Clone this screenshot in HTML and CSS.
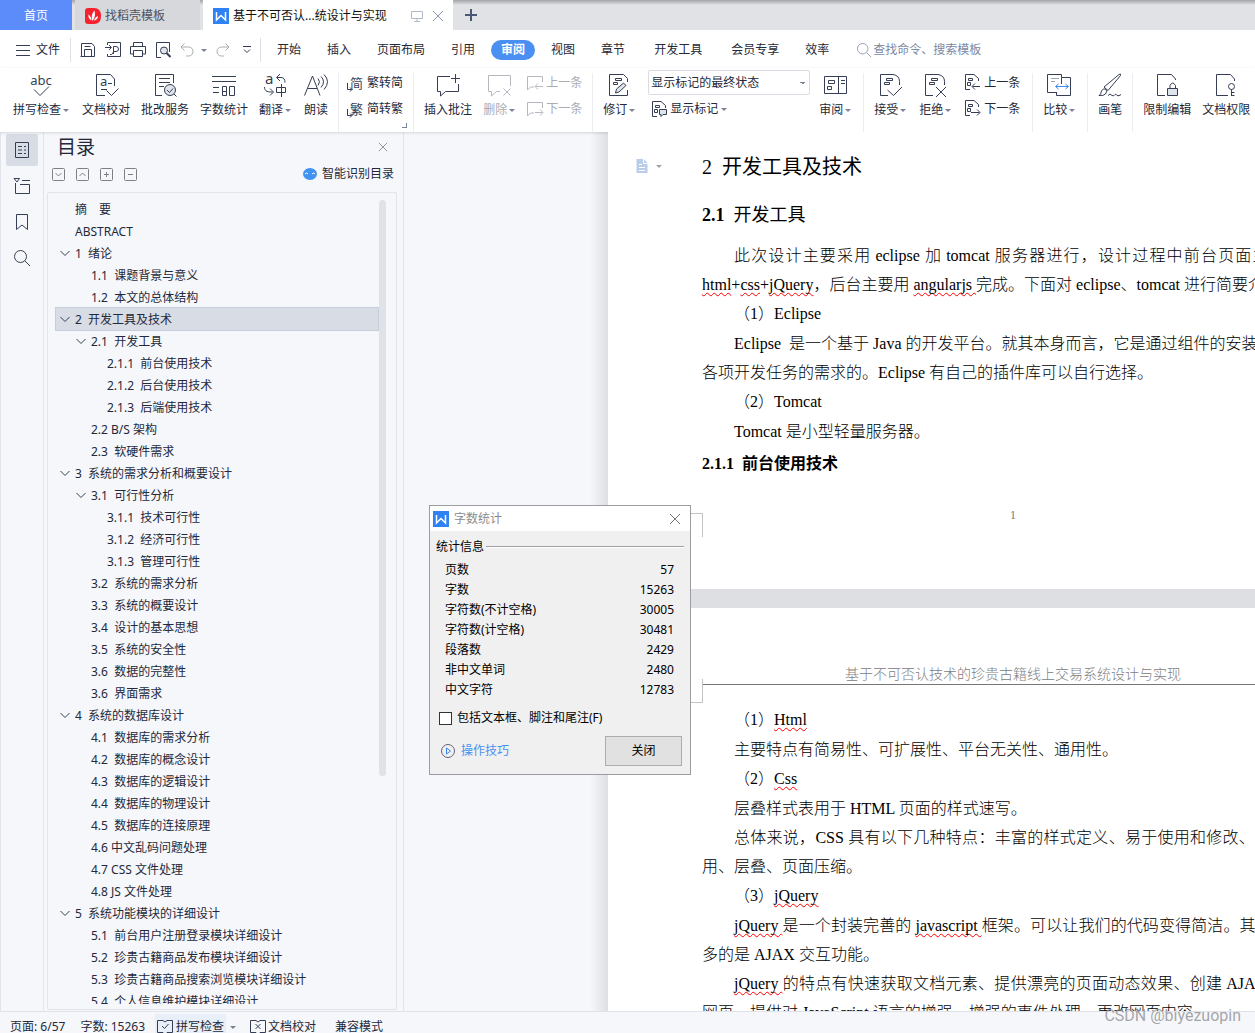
FILE: index.html
```html
<!DOCTYPE html>
<html lang="zh-CN">
<head>
<meta charset="utf-8">
<title>基于不可否认技术的珍贵古籍线上交易系统设计与实现</title>
<link rel="stylesheet" href="styles.css">
</head>
<body>
<svg class="defs" aria-hidden="true">
  <symbol id="pg" viewBox="0 0 24 24"><path d="M10 22.500H2.500V1.500H15q6.500 1 6.500 7V12M8.500 5.500h6v2h-6zM6.500 9.500h5v2h-5z"/></symbol>
  <symbol id="wlogo" viewBox="0 0 16 16"><path d="M0 0h16v16H0z" fill="#2f82f3" stroke="none"/><path d="M3.500 4v8l4.500-4.500 4.500 4.500V4" fill="none" stroke="#fff" stroke-width="1.500"/></symbol>
  <symbol id="x" viewBox="0 0 12 12"><path d="M1 1l10 10M11 1L1 11"/></symbol>
  <symbol id="chev" viewBox="0 0 10 10"><path d="M0.500 3l4.500 4.500L9.500 3"/></symbol>
  <symbol id="lens" viewBox="0 0 16 16"><circle cx="6.500" cy="6.500" r="6"/><path d="M11 11l5 5"/></symbol>
  <symbol id="smallpg" viewBox="0 0 18 18"><path d="M6 15.500H1.500V.500H10l4.500 4V7M4.500 4.500h4v2h-4zM3.500 8.500h3v3h-3z"/></symbol>
  <symbol id="bubble" viewBox="0 0 18 18"><path d="M16.500 8V2.500H1.500v13.500l3-3H8"/></symbol>
</svg>
<div class="app">
  <header class="tabs">
    <button class="tab home">首页</button>
    <button class="tab idle"><svg class="i16" viewBox="0 0 16 16"><path d="M3 0h6q7 0 7 8t-7 8H3q-3 0-3-3V3q0-3 3-3z" fill="#f5222d" stroke="none"/><path d="M7.500 13C6 9 7 5 9.500 2.500 10.500 6 10 10 7.500 13zM6.500 12.500C4 11 3 9 3.500 6.500 5.500 8 6.500 10 6.500 12.500zM9 12.500c.500-2 2-4 4-4.500C13 10.500 11.500 12 9 12.500z" fill="#fff" stroke="none"/></svg>找稻壳模板</button>
    <div class="tab active"><svg class="i16"><use href="#wlogo"/></svg><span>基于不可否认...统设计与实现</span>
      <svg class="i12 mon" viewBox="0 0 12 12"><path d="M.500 1.500h11v7H.500zM6 9v2M3 11.500h6"/></svg>
      <button class="bare" aria-label="关闭标签"><svg class="i12 mute"><use href="#x"/></svg></button></div>
    <button class="bare plus" aria-label="新建"><svg class="i12" viewBox="0 0 12 12"><path d="M6 0v12M0 6h12" stroke="#4a5878" stroke-width="2"/></svg></button>
  </header>

  <nav class="menu">
    <button class="bare file"><svg class="i14" viewBox="0 0 14 14"><path d="M0 2.500h14M0 7.500h14M0 12.500h14"/></svg>文件</button>
    <span class="rule"></span>
    <div class="quick">
      <button class="bare" aria-label="保存"><svg class="i16" viewBox="0 0 16 16"><path d="M1.500 15V1.500H12l2.500 3V14.500H.500M4.500 14V7.500h7V14M4.500 4.500h6"/></svg></button>
      <button class="bare" aria-label="输出PDF"><svg class="i16" viewBox="0 0 16 16"><path d="M2.500 3V.500h13v14h-13V12M0 5.500h6M4 3l2.500 2.500L4 8M8.500 12V4.500h2.500a2 2 0 010 5H8M5 12.500c2 .500 3-1 3.500-3"/></svg></button>
      <button class="bare" aria-label="打印"><svg class="i16" viewBox="0 0 16 16"><path d="M3.500 4V.500h9V4M3.500 12H.500V4.500h15V12h-3M3.500 8.500h9v6h-9z"/></svg></button>
      <button class="bare" aria-label="打印预览"><svg class="i16" viewBox="0 0 16 16"><path d="M6 15.500H1.500V.500h13V10"/><circle cx="9" cy="8.500" r="3.500" fill="#dfe3ea"/><path d="M11.500 11l4 4" stroke-width="2"/></svg></button>
      <button class="bare undo" aria-label="撤销"><svg class="i14" viewBox="0 0 14 14"><path d="M4.500.500L1 4l3.500 3.500M1 4h7.500c6 0 6 9 0 9H6"/></svg></button>
      <i class="caret"></i>
      <button class="bare redo" aria-label="恢复"><svg class="i14" viewBox="0 0 14 14"><path d="M9.500.500L13 4 9.500 7.500M13 4H5.500c-6 0-6 9 0 9H8"/></svg></button>
      <button class="bare more" aria-label="更多"><svg class="i8" viewBox="0 0 8 8"><path d="M0 .500h8M1 3.500l3 3 3-3"/></svg></button>
    </div>
    <span class="rule"></span>
    <div class="items">
      <button class="item">开始</button><button class="item">插入</button><button class="item">页面布局</button><button class="item">引用</button><button class="item on">审阅</button><button class="item">视图</button><button class="item">章节</button><button class="item wide">开发工具</button><button class="item wide">会员专享</button><button class="item">效率</button>
    </div>
    <label class="find"><svg class="i14"><use href="#lens"/></svg><input type="text" aria-label="查找命令" placeholder="查找命令、搜索模板"></label>
  </nav>

  <section class="ribbon">
    <button class="big drop"><svg class="i24" viewBox="0 0 24 24"><text x="12" y="12" text-anchor="middle" font-size="13">abc</text><path d="M5 16.500l6 6 9-9"/></svg><span>拼写检查<i class="caret"></i></span></button>
    <button class="big"><svg class="i24" viewBox="0 0 24 24"><path d="M11 22.500H2.500v-21h14l4 4.500v7M12.500 17.500l5 5 7-7M14 10.500h4M7 16.500h6"/><text x="6" y="13" font-size="13">a</text></svg><span>文档校对</span></button>
    <button class="big"><svg class="i24" viewBox="0 0 24 24"><path d="M9 22.500H2.500v-21h18V10M6 5.500h11M6 9.500h11M6 13.500h5"/><circle cx="17" cy="17" r="5.500" fill="#dfe3ea"/><path d="M14 17l2.500 2.500 3.500-4M21 21l2.500 2.500"/></svg><span>批改服务</span></button>
    <button class="big"><svg class="i24" viewBox="0 0 24 24"><path d="M0 3.500h24M0 8.500h24M1 14.500h6M1 19.500h6M10.500 13.500h4v9h-4zM17.500 13.500h5v9h-5zM10 18.500h5"/></svg><span>字数统计</span></button>
    <button class="big drop"><svg class="i24" viewBox="0 0 24 24"><text x="2" y="11" font-size="15">a</text><path d="M17 1l-3.500 3.500L17 8M14 4.500h4q4 0 4 5M1.500 14c0 5 4 5 8 5M7 15.500l3.500 3.500L7 22.500M13.500 14.500h9v5h-9zM18.500 11v13"/></svg><span>翻译<i class="caret"></i></span></button>
    <button class="big"><svg class="i24" viewBox="0 0 24 24"><path d="M.500 22.500L8.500 3l7.500 19.500M4 15.500h9M14 5.500q3 3 0 7M17 3.500q5 5 0 11M20 1.500q7 7 0 15"/></svg><span>朗读</span></button>
    <span class="split first"></span>
    <div class="pair">
      <button class="row hans"><svg class="i16" viewBox="0 0 16 16"><text x="3" y="13" font-size="13">简</text><path d="M.500 8v6.500h4M3 12.500l2 2-2 2"/></svg>繁转简</button>
      <button class="row hans"><svg class="i16" viewBox="0 0 16 16"><text x="3" y="13" font-size="13">繁</text><path d="M.500 8v6.500h4M3 12.500l2 2-2 2"/></svg>简转繁</button>
      <i class="launcher"></i>
    </div>
    <span class="split"></span>
    <button class="big"><svg class="i24" viewBox="0 0 24 24"><path d="M14 3.500H1.500v15h3V23l5-4.500h13V11M19.500 1v9M15 5.500h9"/></svg><span>插入批注</span></button>
    <button class="big off" disabled><svg class="i24" viewBox="0 0 24 24"><path d="M23.500 13V2.500H1.500v16h3V23l5-4.500H13M16.500 15.500l7 7M23.500 15.500l-7 7"/></svg><span>删除<i class="caret"></i></span></button>
    <div class="pair">
      <button class="row off" disabled><svg class="i18" viewBox="0 0 18 18"><use href="#bubble" width="18" height="18"/><path d="M17 12.500H9.500M12 9.500l-3 3 3 3"/></svg>上一条</button>
      <button class="row off" disabled><svg class="i18" viewBox="0 0 18 18"><use href="#bubble" width="18" height="18"/><path d="M9 12.500h7.500M14 9.500l3 3-3 3"/></svg>下一条</button>
    </div>
    <span class="split"></span>
    <button class="big drop"><svg class="i24" viewBox="0 0 24 24"><path d="M20.500 9V5.500l-4-4h-14v21h18V17M8.500 5.500h6v2h-6zM6.500 9.500h4v2h-4z"/><path d="M8.500 20l1-4 7-6 2.500 2.500-7 6.500z" fill="#dfe3ea"/></svg><span>修订<i class="caret"></i></span></button>
    <div class="pair marks">
      <select aria-label="标记状态"><option>显示标记的最终状态</option></select>
      <button class="row"><svg class="i16" viewBox="1 0 16 16"><use href="#smallpg" width="18" height="18"/><path d="M8.500 8.500h7v5H12l-2 2v-2H8.500z" fill="#dfe3ea"/></svg><span>显示标记<i class="caret"></i></span></button>
    </div>
    <button class="big drop"><svg class="i24" viewBox="0 0 24 24"><path d="M1.500 3.500h22v17h-22zM15.500 3.500v17M5.500 7.500h6v3h-6zM4.500 13.500h4v3h-4zM18 7.500h4M18 10.500h4"/></svg><span>审阅<i class="caret"></i></span></button>
    <span class="split"></span>
    <button class="big drop"><svg class="i24" viewBox="0 0 24 24"><use href="#pg" width="24" height="24"/><path d="M9.500 17l6 5.500 8.500-8.500"/></svg><span>接受<i class="caret"></i></span></button>
    <button class="big drop"><svg class="i24" viewBox="0 0 24 24"><use href="#pg" width="24" height="24"/><path d="M13 14l10 10M23 14L13 24"/></svg><span>拒绝<i class="caret"></i></span></button>
    <div class="pair">
      <button class="row"><svg class="i18" viewBox="0 0 18 18"><use href="#smallpg" width="18" height="18"/><path d="M16 12.500H8.500M11 9.500l-3 3 3 3"/></svg>上一条</button>
      <button class="row"><svg class="i18" viewBox="0 0 18 18"><use href="#smallpg" width="18" height="18"/><path d="M7 12.500h8.500M13 9.500l3 3-3 3"/></svg>下一条</button>
    </div>
    <span class="split far"></span>
    <button class="big drop"><svg class="i24" viewBox="0 0 24 24"><path d="M9 19.500H.500v-18h14v3M9.500 19V22.500h14v-18h-9V11"/><path d="M4 5.500h8M4 8.500h4" stroke="#9aa3b5"/><path d="M9 13.500h12M11.500 11l-3 2.500 3 2.500M18.500 11l3 2.500-3 2.500" stroke="#3d86f5"/></svg><span>比较<i class="caret"></i></span></button>
    <span class="split"></span>
    <button class="big"><svg class="i24" viewBox="0 0 24 24"><path d="M6 14L21 1.500q2-1.500 1.500 1L10 17.500zM1 22.500q2-1 2.500-4.500 1.500-3 4-2 2.500 2 0 5-2 2-6.500 1.500zM10 22.500q2-3 4 0 2 1 3-1 1-1 2 1 2 1 4-1"/></svg><span>画笔</span></button>
    <span class="split"></span>
    <button class="big"><svg class="i24" viewBox="0 0 24 24"><path d="M10 22.500H2.500v-21h14l4 4.500v1"/><path d="M15 15v-2.500q2.500-5 5.500 0V15"/><path d="M12.500 15.500h10v7h-10z" fill="#dfe3ea"/></svg><span>限制编辑</span></button>
    <button class="big"><svg class="i24" viewBox="0 0 24 24"><path d="M14 22.500H2.500v-21h14l4 4.500v2"/><circle cx="17.500" cy="13.500" r="3"/><path d="M17.500 16.500V23M17.500 19.500h3M17.500 22.500h3"/></svg><span>文档权限</span></button>
  </section>

  <main class="work">
    <aside class="rail">
      <button class="on" aria-label="目录"><svg class="i16" viewBox="0 0 16 16"><path d="M1.500.500h13v15h-13zM4 4.500h4M10 4.500h2M4 8h4M10 8h2M4 11.500h4M10 11.500h2"/></svg></button>
      <button aria-label="章节"><svg class="i16" viewBox="0 0 16 16"><path d="M0 .500h5.500L3 4zM8 2.500h8M1.500 5v10.500h14v-9H6"/></svg></button>
      <button aria-label="书签"><svg class="i16" viewBox="0 0 16 16"><path d="M2.500.500h11v15L8 11l-5.500 4.500z"/></svg></button>
      <button aria-label="查找"><svg class="i16"><use href="#lens"/></svg></button>
    </aside>
    <aside class="pane">
      <div class="title"><h2>目录</h2><button class="bare" aria-label="关闭目录"><svg class="i10"><use href="#x"/></svg></button></div>
      <div class="tools">
        <button class="bare" aria-label="展开"><svg class="i13" viewBox="0 0 13 13"><rect x=".500" y=".500" width="12" height="12" rx="1"/><path d="M3.500 5l3 3 3-3"/></svg></button>
        <button class="bare" aria-label="收起"><svg class="i13" viewBox="0 0 13 13"><rect x=".500" y=".500" width="12" height="12" rx="1"/><path d="M3.500 8l3-3 3 3"/></svg></button>
        <button class="bare" aria-label="增加级别"><svg class="i13" viewBox="0 0 13 13"><rect x=".500" y=".500" width="12" height="12" rx="1"/><path d="M4 6.500h5M6.500 4v5"/></svg></button>
        <button class="bare" aria-label="减少级别"><svg class="i13" viewBox="0 0 13 13"><rect x=".500" y=".500" width="12" height="12" rx="1"/><path d="M4 6.500h5"/></svg></button>
        <button class="bare smart"><svg class="i14" viewBox="0 0 14 14"><ellipse cx="7" cy="7" rx="7" ry="6" fill="#4092f3" stroke="none"/><path d="M2 7q1.500-2 3 0M9 7q1.500-2 3 0" stroke="#fff"/></svg>智能识别目录</button>
      </div>
      <div class="list">
        <ul class="tree">
          <li><a href="#">摘　要</a></li>
          <li><a href="#">ABSTRACT</a></li>
          <li><svg class="i10"><use href="#chev"/></svg><a href="#">1  绪论</a></li>
          <li class="l2"><a href="#">1.1  课题背景与意义</a></li>
          <li class="l2"><a href="#">1.2  本文的总体结构</a></li>
          <li class="sel"><svg class="i10"><use href="#chev"/></svg><a href="#">2  开发工具及技术</a></li>
          <li class="l2"><svg class="i10"><use href="#chev"/></svg><a href="#">2.1  开发工具</a></li>
          <li class="l3"><a href="#">2.1.1  前台使用技术</a></li>
          <li class="l3"><a href="#">2.1.2  后台使用技术</a></li>
          <li class="l3"><a href="#">2.1.3  后端使用技术</a></li>
          <li class="l2"><a href="#">2.2 B/S 架构</a></li>
          <li class="l2"><a href="#">2.3  软硬件需求</a></li>
          <li><svg class="i10"><use href="#chev"/></svg><a href="#">3  系统的需求分析和概要设计</a></li>
          <li class="l2"><svg class="i10"><use href="#chev"/></svg><a href="#">3.1  可行性分析</a></li>
          <li class="l3"><a href="#">3.1.1  技术可行性</a></li>
          <li class="l3"><a href="#">3.1.2  经济可行性</a></li>
          <li class="l3"><a href="#">3.1.3  管理可行性</a></li>
          <li class="l2"><a href="#">3.2  系统的需求分析</a></li>
          <li class="l2"><a href="#">3.3  系统的概要设计</a></li>
          <li class="l2"><a href="#">3.4  设计的基本思想</a></li>
          <li class="l2"><a href="#">3.5  系统的安全性</a></li>
          <li class="l2"><a href="#">3.6  数据的完整性</a></li>
          <li class="l2"><a href="#">3.6  界面需求</a></li>
          <li><svg class="i10"><use href="#chev"/></svg><a href="#">4  系统的数据库设计</a></li>
          <li class="l2"><a href="#">4.1  数据库的需求分析</a></li>
          <li class="l2"><a href="#">4.2  数据库的概念设计</a></li>
          <li class="l2"><a href="#">4.3  数据库的逻辑设计</a></li>
          <li class="l2"><a href="#">4.4  数据库的物理设计</a></li>
          <li class="l2"><a href="#">4.5  数据库的连接原理</a></li>
          <li class="l2"><a href="#">4.6 中文乱码问题处理</a></li>
          <li class="l2"><a href="#">4.7 CSS 文件处理</a></li>
          <li class="l2"><a href="#">4.8 JS 文件处理</a></li>
          <li><svg class="i10"><use href="#chev"/></svg><a href="#">5  系统功能模块的详细设计</a></li>
          <li class="l2"><a href="#">5.1  前台用户注册登录模块详细设计</a></li>
          <li class="l2"><a href="#">5.2  珍贵古籍商品发布模块详细设计</a></li>
          <li class="l2"><a href="#">5.3  珍贵古籍商品搜索浏览模块详细设计</a></li>
          <li class="l2"><a href="#">5.4  个人信息维护模块详细设计</a></li>
        </ul>
        <div class="track"><div class="thumb"></div></div>
      </div>
    </aside>

    <div class="canvas">
      <article class="page">
        <div class="badge"><svg class="i14" viewBox="0 0 14 14"><path d="M1.500 0h7l4 4v10h-11z" fill="#b9cdea" stroke="none"/><path d="M8.500 0v4.500h4M4 5.500h3M4 8.500h6M4 11.500h6" stroke="#fff"/></svg><i class="caret"></i></div>
        <h1>2&nbsp; 开发工具及技术</h1>
        <h2><b>2.1</b>&nbsp; 开发工具</h2>
        <p><span class="full ind">此次设计主要采用&#8197;eclipse&#8197;加&#8197;tomcat&#8197;服务器进行，设计过程中前台页面主要采用</span><u>html</u>+<u>css</u>+<u>jQuery</u>，后台主要用 <u>angularjs </u>完成。下面对 eclipse、tomcat 进行简要介绍。</p>
        <p class="ind num">（1）Eclipse</p>
        <p><span class="full ind tight">Eclipse&nbsp; 是一个基于 Java 的开发平台。就其本身而言，它是通过组件的安装来实现对</span>各项开发任务的需求的。Eclipse 有自己的插件库可以自行选择。</p>
        <p class="ind num">（2）Tomcat</p>
        <p class="ind">Tomcat 是小型轻量服务器。</p>
        <h3>2.1.1&nbsp; 前台使用技术</h3>
        <footer>1</footer>
        <i class="corner bottom"></i>
      </article>
      <article class="page next">
        <i class="corner top"></i>
        <div class="running">基于不可否认技术的珍贵古籍线上交易系统设计与实现</div>
        <p class="ind num">（1）<u>Html</u></p>
        <p class="ind">主要特点有简易性、可扩展性、平台无关性、通用性。</p>
        <p class="ind num">（2）<u>Css</u></p>
        <p class="ind">层叠样式表用于 HTML 页面的样式速写。</p>
        <p><span class="full ind">总体来说，CSS&#8197;具有以下几种特点：丰富的样式定义、易于使用和修改、多页面应</span>用、层叠、页面压缩。</p>
        <p class="ind num">（3）<u>jQuery</u></p>
        <p><span class="full ind"><u>jQuery&#8197;</u>是一个封装完善的&#8197;<u>javascript&#8197;</u>框架。可以让我们的代码变得简洁。其中使用最</span>多的是 AJAX 交互功能。</p>
        <p><span class="full ind"><u>jQuery&#8197;</u>的特点有快速获取文档元素、提供漂亮的页面动态效果、创建&#8197;AJAX&#8197;无刷新</span>网页、提供对 JavaScript 语言的增强、增强的事件处理、更改网页内容。</p>
      </article>
    </div>
  </main>

  <footer class="status">
    <span>页面: 6/57</span><span>字数: 15263</span>
    <button class="bare spell"><svg class="i16" viewBox="0 0 16 16"><path d="M6 1.500H.500v12H6l2 2 2-2h5.500v-12H10l-2 1.500zM5 7l2.500 2.500L11.500 5"/></svg>拼写检查</button><i class="caret"></i>
    <button class="bare proof"><svg class="i16" viewBox="0 0 16 16"><path d="M6 1.500H.500v12H6l2 2 2-2h5.500v-12H10l-2 1.500zM5.500 5l5 5M10.500 5l-5 5"/></svg>文档校对</button>
    <span class="mode">兼容模式</span>
  </footer>
</div>

<div class="dialog" role="dialog" aria-labelledby="dt">
  <div class="bar"><svg class="i16"><use href="#wlogo"/></svg><span id="dt">字数统计</span><button class="bare" aria-label="关闭窗口"><svg class="i12"><use href="#x"/></svg></button></div>
  <div class="legend">统计信息</div>
  <table>
    <tr><th>页数</th><td>57</td></tr>
    <tr><th>字数</th><td>15263</td></tr>
    <tr><th>字符数(不计空格)</th><td>30005</td></tr>
    <tr><th>字符数(计空格)</th><td>30481</td></tr>
    <tr><th>段落数</th><td>2429</td></tr>
    <tr><th>非中文单词</th><td>2480</td></tr>
    <tr><th>中文字符</th><td>12783</td></tr>
  </table>
  <label class="check"><input type="checkbox">包括文本框、脚注和尾注(F)</label>
  <div class="actions"><a href="#"><svg class="i14" viewBox="0 0 14 14"><circle cx="7" cy="7" r="6.500" stroke="#667"/><path d="M5.500 4l4 3-4 3z" stroke="#3d86f5"/></svg>操作技巧</a><button class="close">关闭</button></div>
</div>
<div class="watermark">CSDN @biyezuopin</div>
</body>
</html>
```
FILE: styles.css
```css
* { box-sizing: border-box; }
body {
  margin: 0;
  overflow: hidden;
  font: 12px/18px "Noto Sans", "Noto Sans CJK SC", sans-serif;
  color: #23293a;
}
button, input, select { font: inherit; color: inherit; }
button { border: 0; background: none; padding: 0; white-space: nowrap; }
a { color: inherit; text-decoration: none; }
svg { fill: none; stroke: #353e54; flex: none; display: block; overflow: visible; }
svg text { fill: #353e54; stroke: none; }
.defs { position: absolute; width: 0; height: 0; }
.i8 { width: 8px; height: 8px; }
.i10 { width: 10px; height: 10px; }
.i12 { width: 12px; height: 12px; }
.i13 { width: 13px; height: 13px; }
.i14 { width: 14px; height: 14px; }
.i16 { width: 16px; height: 16px; }
.i18 { width: 18px; height: 18px; }
.i24 { width: 24px; height: 24px; }
.bare { display: flex; align-items: center; }
.caret {
  display: inline-block;
  border: 3px solid transparent;
  border-top-color: #7a8499;
  border-bottom: 0;
  vertical-align: middle;
}
.app { height: 100vh; display: flex; flex-direction: column; background: #f6f7fa; }

/* document tabs */
.tabs {
  display: flex;
  gap: 3px;
  height: 30px;
  flex: none;
  background: linear-gradient(#a4a5a8, #e1e2e5 5px);
}
.tab { display: flex; align-items: center; gap: 4px; padding-top: 2px; }
.home { width: 72px; justify-content: center; background: #5b8cfa; color: #fff; }
.idle { width: 125px; padding-left: 10px; background: #d7d8dc; color: #4b5263; }
.active { width: 250px; padding-left: 10px; background: #fff; color: #111; }
.mon { margin-left: 20px; stroke: #b0b8ca; }
.active .bare { margin-left: 5px; }
.mute { stroke: #8a96b0; }
.plus { margin-left: 9px; }

/* menu row */
.menu { display: flex; align-items: center; height: 38px; padding-top: 2px; flex: none; background: #fff; }
.file { gap: 6px; padding-left: 16px; }
.rule { width: 1px; height: 24px; background: #dcdfe5; margin: 0 9px 0 10px; }
.quick { display: flex; align-items: center; gap: 9px; width: 170px; }
.undo svg, .redo svg { stroke: #a9acb3; }
.quick .caret { margin-left: -2px; }
.more { margin-left: 4px; }
.items { display: flex; gap: 6px; margin-left: -3px; }
.item { padding: 0 10px; height: 20px; border-radius: 10px; }
.wide { margin-left: 3px; }
.on.item { background: #4a90f2; color: #fff; font-weight: bold; }
.find { display: flex; align-items: center; gap: 2px; margin-left: 18px; flex: 1; }
.find svg { stroke: #8a96b0; }
.find input { border: 0; padding: 0; width: 120px; outline: 0; background: none; }
.find input::placeholder { color: #7c88a2; }

/* ribbon */
.ribbon {
  display: flex;
  gap: 11px;
  height: 64px;
  flex: none;
  padding: 5px 0 0 13px;
  background: #fff;
  box-shadow: 0 1px 3px #0002;
  position: relative;
  overflow: hidden;
}
.big { display: flex; flex-direction: column; align-items: center; gap: 4px; height: 46px; flex: none; }
.big .caret { margin-left: 2px; }
.drop { margin-right: 2px; }
.off, .ribbon .off svg { color: #a9acb3; stroke: #b5b8bf; }
.split { width: 1px; height: 62px; margin: 0 -1px; background: #ebedf0; flex: none; }
.first { margin-right: -3px; }
.far { margin-left: 1px; }
.pair { display: flex; flex-direction: column; gap: 8px; flex: none; position: relative; margin-top: 1px; }
.row { display: flex; align-items: center; gap: 2px; height: 18px; color: inherit; }
.row.off { color: #a9acb3; }
.hans { gap: 4px; }
.launcher { position: absolute; right: -4px; bottom: 4px; width: 5px; height: 5px; border: solid #7a8499; border-width: 0 1px 1px 0; }
.marks { gap: 3px; width: 162px; margin: -3px -2px 0 0; }
.marks .row { padding-left: 4px; height: 22px; }
.marks .caret { margin-left: 3px; }
select {
  appearance: none;
  height: 25px;
  padding: 0 2px;
  border: 1px solid #d9dce3;
  border-radius: 2px;
  background: #fff conic-gradient(from -45deg at 50% 100%, #7a8499 90deg, transparent 0) right 3px top 11px / 6px 3px no-repeat;
}

/* side rail and outline pane */
.work { display: flex; flex: 1; min-height: 0; overflow: hidden; }
.rail { width: 44px; flex: none; border: solid #e1e4ea; border-width: 0 1px; padding: 2px 5px; display: flex; flex-direction: column; gap: 4px; }
.rail button { width: 32px; height: 32px; display: flex; align-items: center; justify-content: center; border-radius: 2px; }
.rail .on { background: #d8dce5; }
.pane { width: 360px; flex: none; border-right: 1px solid #e1e4ea; padding: 0 6px 0 3px; display: flex; flex-direction: column; }
.title { display: flex; justify-content: space-between; align-items: center; padding: 0 9px 0 10px; height: 29px; flex: none; }
.title h2 { margin: 0; font-size: 19px; line-height: 26px; font-weight: normal; }
.title svg { stroke: #7d8187; }
.tools { display: flex; gap: 11px; align-items: center; height: 26px; flex: none; padding-left: 5px; margin-bottom: 5px; }
.tools svg { stroke: #7d8187; }
.smart { gap: 5px; margin-left: auto; margin-right: 3px; }
.list { flex: 1; min-height: 0; display: flex; border: 1px solid #e1e4ea; border-radius: 2px; padding: 5px 10px 5px 7px; margin-bottom: 1px; }
.tree { list-style: none; margin: 0; padding: 0; flex: 1; overflow: hidden; }
.tree li { display: flex; align-items: center; height: 22px; padding-left: 20px; white-space: pre; }
.tree a { padding-top: 2px; }
.tree svg { margin: 0 5px 0 -15px; }
.tree .l2 { padding-left: 36px; }
.tree .l3 { padding-left: 52px; }
.tree .sel { height: 24px; margin: -1px 0; background: #d8dce5; border: 1px solid #c6cedb; padding-left: 19px; }
.track { width: 7px; padding-top: 2px; }
.thumb { height: 576px; border-radius: 4px; background: #dfe2e6; }

/* document canvas */
.canvas { flex: 1; min-width: 0; overflow: hidden; padding-left: 204px; background: linear-gradient(90deg, #f6f7fa 186px, #dddfe2 204px); }
.page {
  position: relative;
  width: 810px;
  padding: 21px 94px 66px;
  background: #fff;
  color: #000;
  font: 300 16px/29px "Liberation Serif", "Noto Sans CJK SC", serif;
}
.page h1 { margin: 0 0 20px; font-size: 20px; line-height: 28px; font-weight: 400; }
.page h2 { margin: 0 0 12px; font-size: 18px; line-height: 28px; font-weight: 400; }
.page h3 { margin: 6px 0 31px; font-size: 16px; line-height: 24px; font-weight: 700; }
.page p { margin: 0; white-space: nowrap; }
.ind { text-indent: 32px; }
.page .num { margin-bottom: 1px; }
.full { display: block; margin-right: 4px; text-align: justify; text-align-last: justify; white-space: normal; }
.full.tight { white-space: nowrap; }
.page u { text-decoration: underline wavy #f00 1px; text-underline-offset: 2px; text-decoration-skip-ink: none; }
.page footer { text-align: center; font-size: 12px; line-height: 16px; color: #777; }
.badge { position: absolute; left: 27px; top: 27px; display: flex; align-items: center; gap: 7px; }
.badge .caret { border-top-color: #a0a4ab; }
.next { margin-top: 19px; padding-top: 57px; box-shadow: 0 -19px #dddfe2; }
.running { text-align: center; font-size: 14px; line-height: 19px; color: #808080; border-bottom: 1px solid #777; margin-bottom: 20px; }
.corner { position: absolute; left: 71px; width: 24px; height: 24px; border: solid #c4c4c4; }
.corner.bottom { bottom: 52px; border-width: 1px 1px 0 0; }
.corner.top { top: 71px; border-width: 0 1px 1px 0; }

/* status bar */
.status { display: flex; height: 22px; flex: none; padding: 6px 0 0 10px; border-top: 1px solid #dfe2e8; background: #f6f7fa; overflow: hidden; }
.status > span + span { margin-left: 15px; }
.status > .caret { margin: 8px 14px 0 4px; }
.spell { gap: 3px; padding: 0 2px; margin: -4px 0 0 10px; background: #e8eff9; height: 26px; }
.proof { gap: 2px; height: 18px; }
.status .mode { margin-left: 19px; }

/* word count dialog */
.dialog {
  position: absolute;
  left: 429px;
  top: 505px;
  width: 262px;
  border: 1px solid #9b9da1;
  background: #f0f0f0;
  color: #000;
  padding-bottom: 8px;
}
.bar { display: flex; align-items: center; gap: 5px; height: 25px; padding: 0 9px 0 3px; background: #fff; color: #8c8c8c; }
.bar .bare { margin-left: auto; }
.bar .bare svg { stroke: #777; }
.legend { display: flex; align-items: center; gap: 2px; margin: 7px 6px 4px; }
.legend::after { content: ""; flex: 1; border-top: 1px solid #a0a0a0; border-bottom: 1px solid #fff; }
.dialog table { width: 100%; border-collapse: collapse; }
.dialog th, .dialog td { height: 20px; padding: 0 15px; line-height: 18px; font-weight: normal; text-align: left; }
.dialog td { text-align: right; padding-right: 16px; }
.check { display: flex; align-items: center; gap: 5px; margin: 9px 9px; }
.check input { appearance: none; width: 13px; height: 13px; margin: 0; border: 1px solid #333; background: #fff; }
.actions { display: flex; align-items: center; justify-content: space-between; padding: 0 8px 0 11px; }
.actions a { display: flex; align-items: center; gap: 6px; color: #4a90f2; }
.close { width: 77px; height: 30px; border: 1px solid #adadad; background: #e1e1e1; }

.watermark { position: absolute; right: 14px; bottom: 8px; font: 16px/18px Roboto, sans-serif; color: #8f9093cc; }
```
